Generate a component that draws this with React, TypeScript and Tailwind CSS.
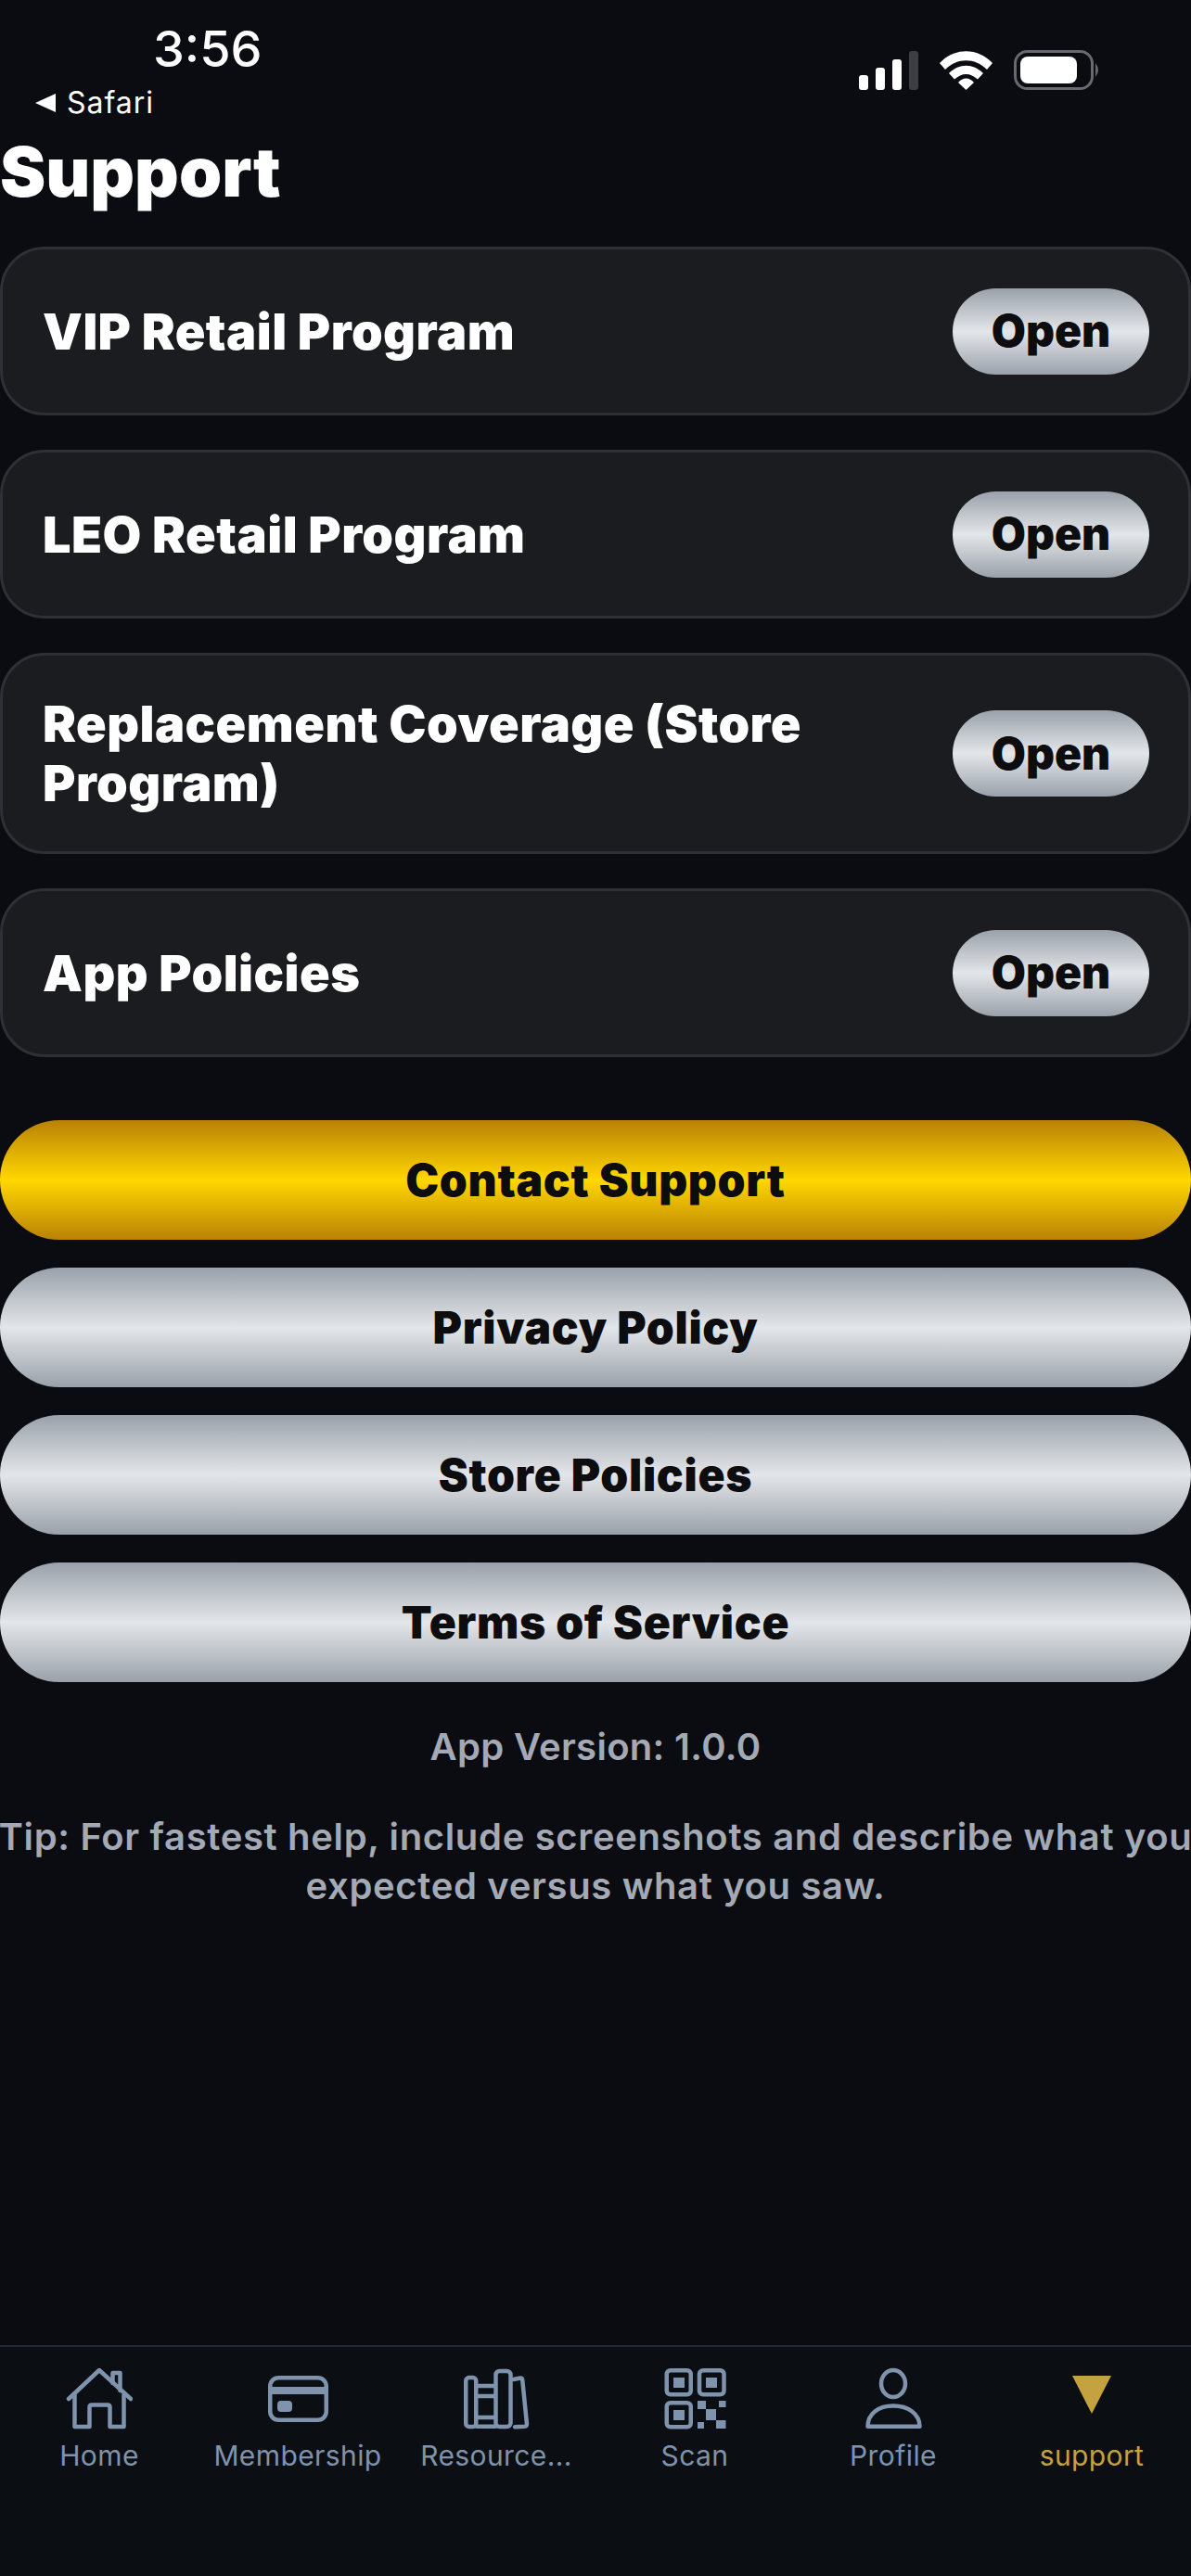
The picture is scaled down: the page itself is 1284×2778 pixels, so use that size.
const silver = "bg-[linear-gradient(180deg,#9aa1aa_0%,#e3e6e9_50%,#9aa1aa_100%)]";

function Row({ title }: { title: string }) {
  return (
    <div className="flex items-center justify-between bg-[#1a1c20] border-[3px] border-[#2e3035] rounded-[48px] min-h-[182px] pl-[43px] pr-[42px] py-[41px]">
      <div className="flex-1 text-[54px] leading-[64px] font-[900] tracking-[0.45px] text-white pr-[40px] pt-[1px]">{title}</div>
      <div className={`${silver} w-[212px] h-[93px] rounded-full flex items-center justify-center text-[48px] font-[900] text-[#0d0d0f]`}>Open</div>
    </div>
  );
}

function Btn({ label, gold }: { label: string; gold?: boolean }) {
  return (
    <div className={`${gold ? "bg-[linear-gradient(180deg,#b98106_0%,#ffd700_50%,#b98106_100%)]" : silver} h-[129px] rounded-[64px] flex items-center justify-center text-[48px] font-[900] tracking-[0.7px] text-[#0d0d0f]`}>{label}</div>
  );
}

const IC = "#7f93ad";
function Svg({ children }: { children: React.ReactNode }) {
  return <svg width="72" height="72" viewBox="0 0 72 72" fill="none" stroke={IC} strokeWidth="4.5" strokeLinejoin="round" strokeLinecap="round">{children}</svg>;
}
const HomeI = () => (
  <Svg>
    <path d="M3 36 L36 5 L70 36" />
    <path d="M9.5 32 V66 H25.5 V45 Q25.5 42.5 28 42.5 H45 Q47.5 42.5 47.5 45 V66 H62.5 V32" />
    <path d="M50.5 19 V8 H58.5 V27" />
  </Svg>
);
const CardI = () => (
  <Svg>
    <rect x="6.25" y="13.25" width="60.5" height="45.5" rx="9" />
    <rect x="6" y="23" width="61" height="8" fill={IC} stroke="none" />
    <rect x="14" y="38" width="16" height="12" rx="4" fill={IC} stroke="none" />
  </Svg>
);
const BooksI = () => (
  <Svg>
    <rect x="3.25" y="13" width="11" height="53" rx="3.5" />
    <path d="M15 22 H35 M15 33 H35 M15 56 H35 M15 65.75 H35" />
    <rect x="35.5" y="6" width="16" height="60" rx="4" />
    <path d="M54.5 15 L62 13.5 Q64 13.5 64.2 15.5 L69 63 Q69 65.5 66.5 65.7 L56 66.2" />
  </Svg>
);
const ScanI = () => (
  <Svg>
    <rect x="5.75" y="5.25" width="26" height="26" rx="4" />
    <rect x="41" y="5.25" width="26.5" height="26" rx="4" />
    <rect x="5.75" y="40.25" width="26" height="26" rx="4" />
    <g fill={IC} stroke="none">
      <rect x="13" y="13" width="12" height="11" />
      <rect x="48" y="13" width="12" height="11" />
      <rect x="13" y="48" width="12" height="11" />
      <rect x="39" y="38" width="9" height="9" />
      <rect x="62" y="38" width="7.5" height="7" />
      <rect x="48" y="47" width="11" height="12" />
      <rect x="39" y="61" width="7" height="7" />
      <rect x="59" y="59" width="10.5" height="9" />
    </g>
  </Svg>
);
const PersonI = () => (
  <Svg>
    <ellipse cx="36" cy="19.5" rx="13" ry="14.5" />
    <path d="M8.5 65.75 C8.5 52 20 43.5 36 43.5 C52 43.5 64.5 52 64.5 65.75 Z" />
  </Svg>
);
const TriI = () => (
  <svg width="72" height="72" viewBox="0 0 72 72"><polygon points="15,11 57,11 36,52" fill="#c4a23f" /></svg>
);

function Tab({ icon, label, active }: { icon: React.ReactNode; label: string; active?: boolean }) {
  return (
    <div className="w-[214px] flex flex-col items-center">
      {icon}
      <div className={`text-[30px] leading-[40px] mt-[5px] font-[400] tracking-[0.4px] whitespace-nowrap ${active ? "text-[#c4a23f]" : "text-[#7f93ad]"}`}>{label}</div>
    </div>
  );
}

export default function App() {
  return (
    <div className="w-[1284px] h-[2778px] flex flex-col bg-[#0b0c11] overflow-hidden text-white font-['Inter','Liberation_Sans',sans-serif]">
      <div className="h-[266px] shrink-0 flex flex-col">
        <div className="flex justify-between items-start h-[96px] pt-[20px]">
          <div className="pl-[165px] text-[54px] leading-[66px] font-[500]">3:56</div>
          <div className="flex items-center gap-[23px] pr-[97px] pt-[34px]">
            <svg width="64" height="42" viewBox="0 0 64 42">
              <rect x="0" y="26" width="10" height="16" rx="3" fill="#fff" />
              <rect x="18" y="18" width="10" height="24" rx="3" fill="#fff" />
              <rect x="36" y="9" width="10" height="33" rx="3" fill="#fff" />
              <rect x="54" y="0" width="10" height="42" rx="3" fill="#3c3e43" />
            </svg>
            <svg width="57" height="42" viewBox="0 0 57 42" fill="#fff">
              <path d="M0 13 C16 -4 41 -4 57 13 L51 20 C38 7 19 7 6 20 Z" />
              <path d="M10 24 C21 13 36 13 47 24 L41 30.5 C33 23 24 23 16 30.5 Z" />
              <path d="M20 34 C25 28 32 28 37 34 L28.5 42 Z" />
            </svg>
            <svg width="94" height="43" viewBox="0 0 94 43">
              <rect x="1.5" y="1.5" width="83" height="40" rx="13" fill="none" stroke="#67696d" strokeWidth="3" />
              <rect x="7" y="7" width="61" height="29" rx="8" fill="#fff" />
              <path d="M88 14 Q94 21.5 88 29 Z" fill="#67696d" />
            </svg>
          </div>
        </div>
        <div className="flex items-center h-[30px] pl-[38px] gap-[12px]">
          <svg width="22" height="20" viewBox="0 0 22 20"><polygon points="0,10 22,0 22,20" fill="#fff" /></svg>
          <span className="text-[32px] leading-[30px] font-[400] tracking-[1px]">Safari</span>
        </div>
        <div className="text-[74px] leading-[88px] font-[900] mt-[15px]">Support</div>
      </div>

      <div className="flex-1 flex flex-col">
        <div className="flex flex-col gap-[37px]">
          <Row title="VIP Retail Program" />
          <Row title="LEO Retail Program" />
          <Row title="Replacement Coverage (Store Program)" />
          <Row title="App Policies" />
        </div>
        <div className="flex flex-col gap-[30px] mt-[68px]">
          <Btn label="Contact Support" gold />
          <Btn label="Privacy Policy" />
          <Btn label="Store Policies" />
          <Btn label="Terms of Service" />
        </div>
        <div className="mt-[43px] text-center text-[40px] leading-[53px] font-[600] tracking-[0.3px] text-[#a3a9b5]">App Version: 1.0.0</div>
        <div className="mt-[44px] -mx-[10px] text-center text-[40px] leading-[53px] font-[600] tracking-[0.65px] text-[#a3a9b5]">Tip: For fastest help, include screenshots and describe what you expected versus what you saw.</div>
      </div>

      <div className="h-[249px] shrink-0 bg-[#0b0f14] border-t-[2px] border-[#1f2937] flex pt-[20px]">
        <Tab icon={<HomeI />} label="Home" />
        <Tab icon={<CardI />} label="Membership" />
        <Tab icon={<BooksI />} label="Resource..." />
        <Tab icon={<ScanI />} label="Scan" />
        <Tab icon={<PersonI />} label="Profile" />
        <Tab icon={<TriI />} label="support" active />
      </div>
    </div>
  );
}
